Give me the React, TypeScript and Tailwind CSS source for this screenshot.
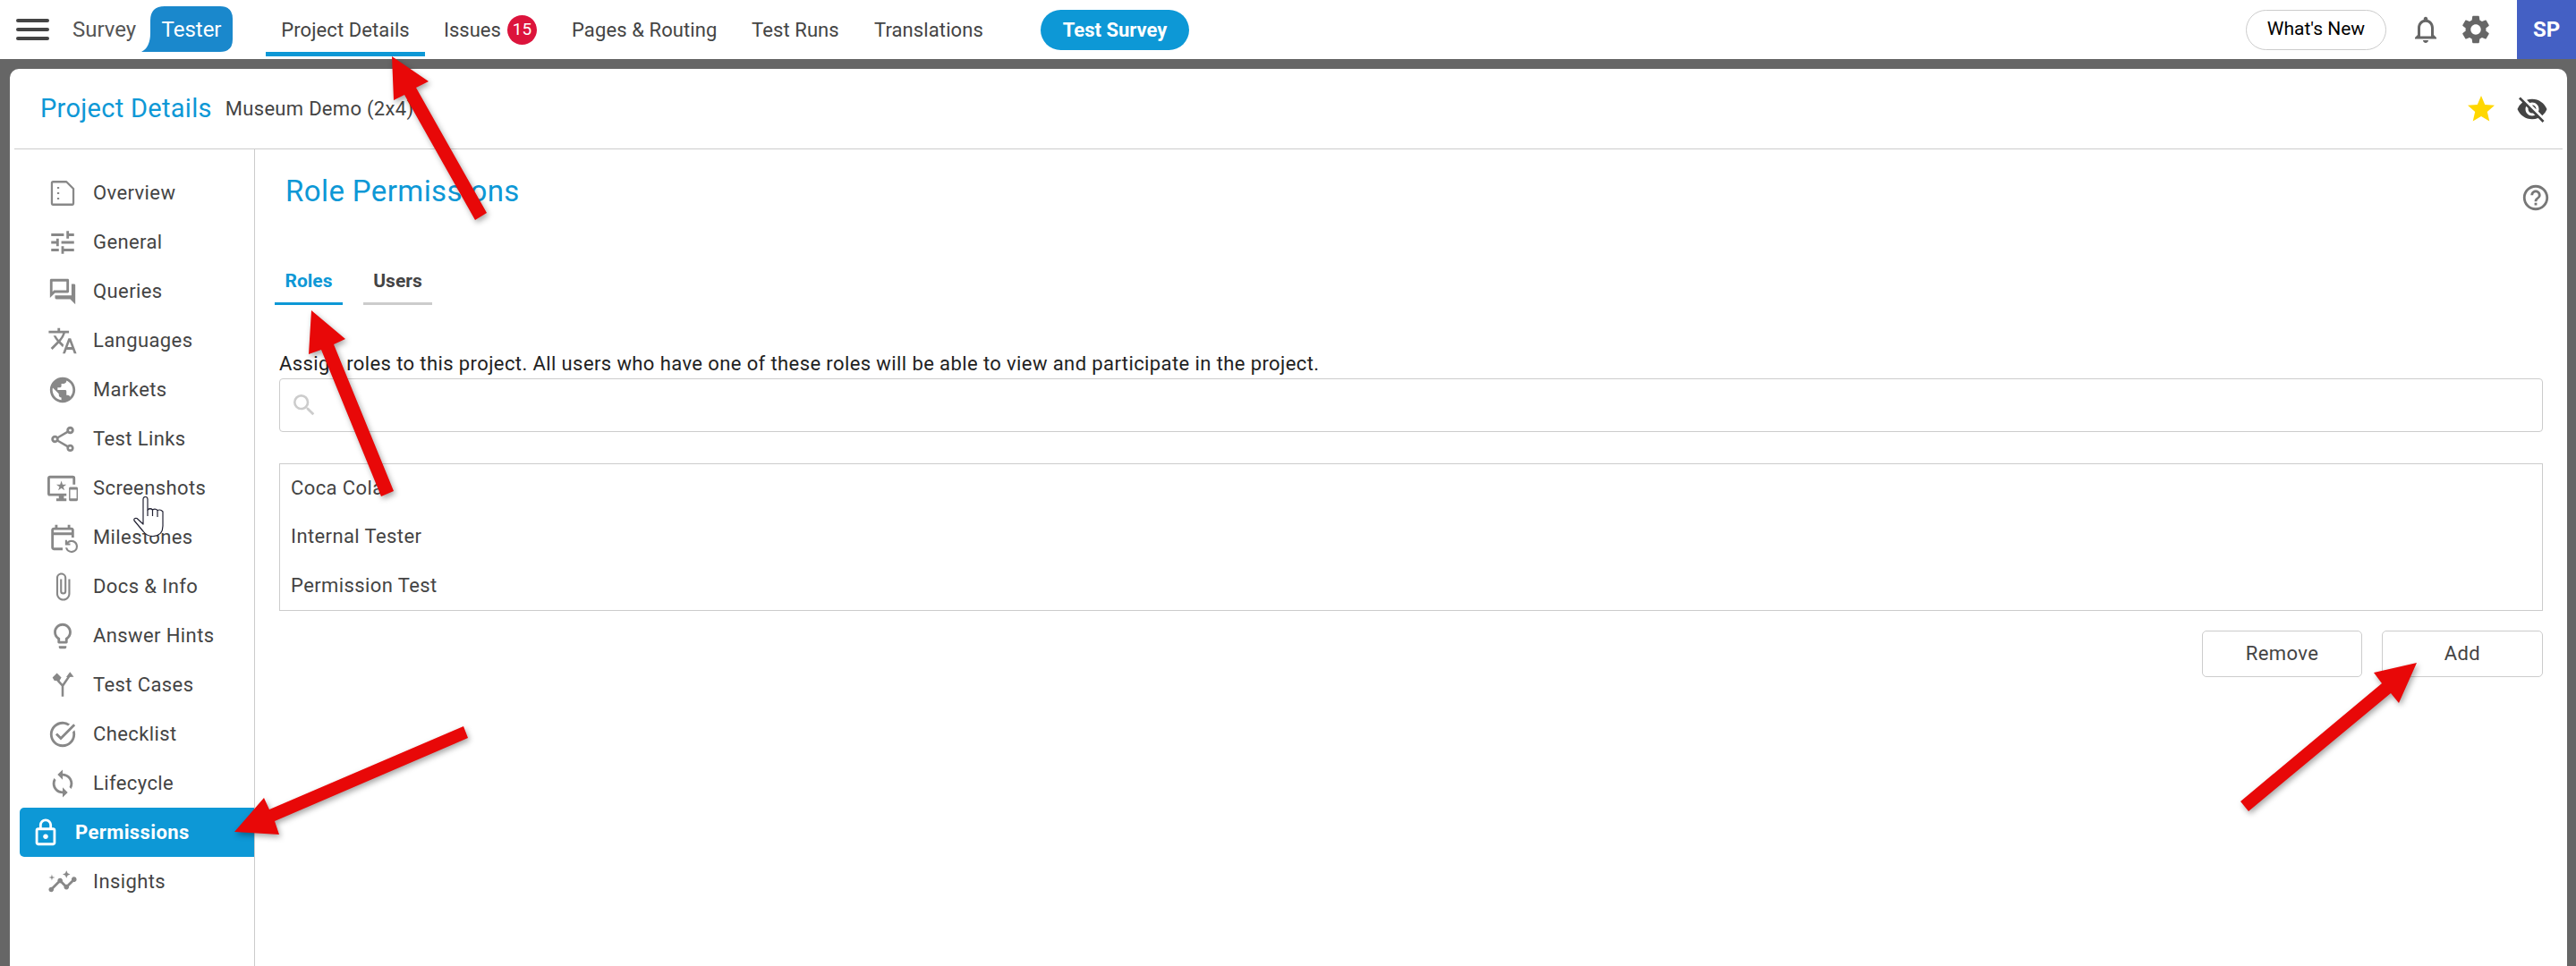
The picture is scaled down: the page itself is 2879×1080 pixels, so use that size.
import type { ReactElement } from 'react';
import {
  MdTune,
  MdOutlineForum,
  MdTranslate,
  MdPublic,
  MdOutlineShare,
  MdOutlineImportantDevices,
  MdOutlineEventRepeat,
  MdOutlineAttachFile,
  MdOutlineLightbulb,
  MdOutlineTaskAlt,
  MdSync,
  MdOutlineLock,
  MdOutlineInsights,
  MdOutlineNotifications,
  MdSettings,
  MdVisibilityOff,
  MdStar,
  MdOutlineHelpOutline,
  MdSearch,
} from 'react-icons/md';

function OverviewIcon({ className }: { className?: string }): ReactElement {
  return (
    <svg viewBox="0 0 24 24" className={className} fill="none" stroke="currentColor">
      <path d="M3.500 4a1 1 0 0 1 1-1h10.500l5.500 5.500V20a1 1 0 0 1-1 1h-15a1 1 0 0 1-1-1z" strokeWidth="1.600" strokeLinejoin="round" />
      <path d="M8.500 7v1.400M8.500 11.300v1.400M8.500 15.600v1.400" strokeWidth="1.600" />
    </svg>
  );
}

function TestCasesIcon({ className }: { className?: string }): ReactElement {
  return (
    <svg viewBox="0 0 24 24" className={className} fill="currentColor">
      <path d="M12 21v-8.500L7.500 7.500M12 12.500l5.500-8" fill="none" stroke="currentColor" strokeWidth="1.800" />
      <path d="M7.500 2.500l3.500 3.500-1.500 2.500H5.500L4 6zM17.800 1.500l3 4-6 .200z" />
    </svg>
  );
}

const sideItems = [
  { label: 'Overview', icon: OverviewIcon },
  { label: 'General', icon: MdTune },
  { label: 'Queries', icon: MdOutlineForum },
  { label: 'Languages', icon: MdTranslate },
  { label: 'Markets', icon: MdPublic },
  { label: 'Test Links', icon: MdOutlineShare },
  { label: 'Screenshots', icon: MdOutlineImportantDevices },
  { label: 'Milestones', icon: MdOutlineEventRepeat },
  { label: 'Docs & Info', icon: MdOutlineAttachFile },
  { label: 'Answer Hints', icon: MdOutlineLightbulb },
  { label: 'Test Cases', icon: TestCasesIcon },
  { label: 'Checklist', icon: MdOutlineTaskAlt },
  { label: 'Lifecycle', icon: MdSync },
];

function TopBar(): ReactElement {
  return (
    <div className="flex h-[66px] items-center bg-white text-[#444]">
      <div className="ml-[18px] flex h-[24px] w-[37px] flex-col justify-between">
        <div className="h-[4px] rounded-sm bg-[#444]" />
        <div className="h-[4px] rounded-sm bg-[#444]" />
        <div className="h-[4px] rounded-sm bg-[#444]" />
      </div>
      <span className="ml-[26px] w-[77px] text-[24px] text-[#555]">Survey</span>
      <div className="relative mt-[7px] flex h-[51px] w-[102px] items-center justify-center self-start">
        <svg viewBox="0 0 102 51" className="absolute inset-0 h-full w-full">
          <path d="M0 51Q10 46 10 30V16Q10 0 26 0H88Q102 0 102 14V37Q102 51 88 51Z" fill="#1a88cc" />
        </svg>
        <span className="relative ml-[10px] text-[24px] text-white">Tester</span>
      </div>
      <div className="relative ml-[37px] flex h-[66px] w-[178px] items-center justify-center">
        <span className="text-[22px] tracking-[0.1px]">Project Details</span>
        <div className="absolute bottom-[3px] left-0 h-[5px] w-full bg-[#0d98d6]" />
      </div>
      <span className="ml-[21px] w-[65px] text-[22px]">Issues</span>
      <span className="ml-[6px] flex h-[33px] w-[33px] items-center justify-center rounded-full bg-[#dc143c] text-[19px] text-white">15</span>
      <span className="ml-[39px] w-[162px] text-[22px] tracking-[0.1px] whitespace-nowrap">Pages &amp; Routing</span>
      <span className="ml-[39px] w-[98px] text-[22px] tracking-[0.1px] whitespace-nowrap">Test Runs</span>
      <span className="ml-[39px] w-[122px] text-[22px] tracking-[0.1px]">Translations</span>
      <button className="ml-[64px] h-[45px] w-[166px] rounded-full bg-[#0d98d6] text-[22px] font-bold text-white">Test Survey</button>
      <div className="flex-1" />
      <button className="h-[45px] w-[157px] rounded-full border border-[#ccc] text-[21px] text-black">What's New</button>
      <MdOutlineNotifications className="ml-[26px] h-[36px] w-[36px] text-[#666]" />
      <MdSettings className="ml-[19px] h-[38px] w-[38px] text-[#666]" />
      <div className="ml-[27px] flex h-[66px] w-[66px] items-center justify-center bg-[#4460c4] text-[24px] font-bold text-white">SP</div>
    </div>
  );
}

function SideNav(): ReactElement {
  return (
    <div className="w-[274px] shrink-0 border-r border-[#ccc] pt-[21px]">
      {sideItems.map((item) => (
        <div key={item.label} className="ml-[11px] flex h-[55px] items-center pl-[31px]">
          <item.icon className="h-[34px] w-[34px] text-[#888]" />
          <span className="ml-[17px] text-[22px] tracking-[0.4px] text-[#444]">{item.label}</span>
        </div>
      ))}
      <div className="ml-[11px] flex h-[55px] items-center rounded-l-[5px] bg-[#0d98d6] pl-[12px] text-white">
        <MdOutlineLock className="h-[34px] w-[34px]" />
        <span className="ml-[16px] text-[22px] font-bold tracking-[0.4px]">Permissions</span>
      </div>
      <div className="ml-[11px] flex h-[55px] items-center pl-[31px]">
        <MdOutlineInsights className="h-[34px] w-[34px] text-[#888]" />
        <span className="ml-[17px] text-[22px] tracking-[0.4px] text-[#444]">Insights</span>
      </div>
    </div>
  );
}

function RolesPanel(): ReactElement {
  return (
    <div className="flex-1 px-[27px] text-[#444]">
      <div className="mt-[24px] flex h-[44px] items-center justify-between">
        <h1 className="ml-[7px] pt-[2px] text-[33px] tracking-[0.4px] text-[#0d98d6]">Role Permissions</h1>
        <MdOutlineHelpOutline className="mr-[-9px] mt-[16px] h-[34px] w-[34px] text-[#777]" />
      </div>
      <div className="ml-[-5px] mt-[55px] flex gap-[23px]">
        <div className="flex h-[51px] w-[76px] items-center justify-center border-b-[3px] border-[#0d98d6] pt-[2px] text-[21px] font-bold text-[#0d98d6]">Roles</div>
        <div className="flex h-[51px] w-[77px] items-center justify-center border-b-[3px] border-[#ccc] pt-[2px] text-[21px] font-bold">Users</div>
      </div>
      <p className="mt-[51px] h-[31px] text-[22px] leading-[30px] tracking-[0.4px] text-[#222]">
        Assign roles to this project. All users who have one of these roles will be able to view and participate in the project.
      </p>
      <div className="flex h-[60px] items-center rounded-[4px] border border-[#ccc] pl-[11px]">
        <MdSearch className="h-[32px] w-[32px] text-[#ccc]" />
      </div>
      <div className="mt-[35px] h-[165px] border border-[#ccc]">
        {['Coca Cola', 'Internal Tester', 'Permission Test'].map((role) => (
          <div key={role} className="flex h-[54.5px] items-center pb-[2px] pl-[12px] text-[22px] tracking-[0.4px]">{role}</div>
        ))}
      </div>
      <div className="mt-[22px] flex justify-end gap-[22px]">
        <button className="h-[52px] w-[179px] rounded-[5px] border border-[#ccc] pb-[2px] text-[22px] tracking-[0.4px]">Remove</button>
        <button className="h-[52px] w-[180px] rounded-[5px] border border-[#ccc] pb-[2px] text-[22px] tracking-[0.4px]">Add</button>
      </div>
    </div>
  );
}

function Annotations(): ReactElement {
  return (
    <svg className="pointer-events-none absolute inset-0 h-full w-full drop-shadow-[2px_3px_3px_rgba(0,0,0,0.35)]" viewBox="0 0 2879 1080">
      <polygon fill="#e80808" points="438,63 479,91 465,98 544,238 531,246 452,106 440,112" />
      <polygon fill="#e80808" points="348,347 386,379 373,385 440,549 426,555 359,391 345,396" />
      <polygon fill="#e80808" points="262,930 295,892 301,905 518,812 523,825 307,918 312,933" />
      <polygon fill="#e80808" points="2701,741 2653,752 2662,764 2504,896 2513,907 2672,775 2681,786" />
    </svg>
  );
}

export default function App(): ReactElement {
  return (
    <div className="relative h-[1080px] w-[2879px] overflow-hidden bg-[#666] [font-family:Roboto,sans-serif]">
      <TopBar />
      <div className="ml-[11px] mr-[10px] mt-[11px] h-[1003px] rounded-t-[10px] bg-white">
        <div className="mx-[5px] flex h-[90px] items-center border-b border-[#ccc] pl-[29px] pr-[16px]">
          <span className="text-[29px] tracking-[0.3px] text-[#0d98d6]">Project Details</span>
          <span className="ml-[15px] text-[22px] tracking-[0.3px] text-[#444]">Museum Demo (2x4)</span>
          <div className="flex-1" />
          <MdStar className="h-[36px] w-[36px] text-[#ffd700]" />
          <MdVisibilityOff className="ml-[21px] h-[36px] w-[36px] text-[#444]" />
        </div>
        <div className="flex h-[913px]">
          <SideNav />
          <RolesPanel />
        </div>
      </div>
      <svg viewBox="0 0 34 45" className="absolute left-[149px] top-[555px] h-[45px] w-[34px]" fill="#fff" stroke="#223" strokeWidth="1.200" strokeLinejoin="round">
        <path d="M11 31V3a2.500 2.500 0 0 1 5 0V15q3-2.500 5.500 0 3-2 5.500.500 3.500-1.500 6 1.500V33q0 11-11 11.500Q15 44.500 11 39L1 27q-1-3 3-2.500L11 31Z" />
        <path d="M21.500 15v7M27 15.500V23M16 15v7" fill="none" />
      </svg>
      <Annotations />
    </div>
  );
}
